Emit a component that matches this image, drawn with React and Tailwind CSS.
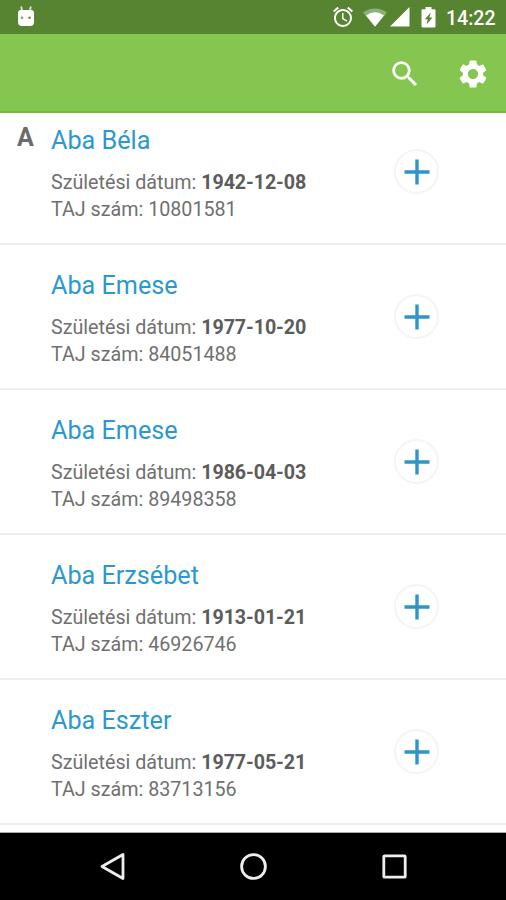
import React from 'react';
import { MdAlarm, MdSearch, MdSettings } from 'react-icons/md';

const patients = [
  { letter: 'A', name: 'Aba Béla', birth: '1942-12-08', taj: '10801581' },
  { name: 'Aba Emese', birth: '1977-10-20', taj: '84051488' },
  { name: 'Aba Emese', birth: '1986-04-03', taj: '89498358' },
  { name: 'Aba Erzsébet', birth: '1913-01-21', taj: '46926746' },
  { name: 'Aba Eszter', birth: '1977-05-21', taj: '83713156' },
];

function StatusBar() {
  return (
    <div className="flex h-[34px] shrink-0 items-center bg-[#568430] pl-[17px] pr-[11px] text-white">
      <svg className="mb-[2px] h-[21px] w-[18px]" viewBox="0 0 18 21">
        <path d="M4.200 0.500l1 5M13.800 0.500l-1 5" stroke="#dce8d2" strokeWidth="1.800" />
        <path
          d="M4 4h10q3 0 3 3v9q0 4-4 4H5q-4 0-4-4V7q0-3 3-3z"
          fill="#fff"
        />
        <circle cx="5" cy="11.800" r="1.300" fill="#8a9f6c" />
        <circle cx="12.500" cy="11.800" r="1.300" fill="#6f8a3c" />
      </svg>
      <MdAlarm className="ml-auto size-6" />
      <svg className="ml-[8px] h-[19px] w-6" viewBox="0 0 24 19">
        <path d="M0 4.500Q12-3.500 24 4.500L12 19z" fill="#fff" opacity=".35" />
        <path d="M3 7.500Q12 1 21 7.500L12 18.500z" fill="#fff" />
      </svg>
      <svg className="ml-[3px] h-5 w-5" viewBox="0 0 20 20">
        <path d="M0 19.500L19.500 0v19.500z" fill="#fff" />
      </svg>
      <svg className="ml-[11px] h-[21px] w-[15px]" viewBox="0 0 15 21">
        <path
          d="M4.500 0h6v2.300h2.700q1.300 0 1.300 1.300v15.600q0 1.300-1.300 1.300H1.800q-1.300 0-1.300-1.300V3.600q0-1.300 1.300-1.300h2.700z"
          fill="#fff"
        />
        <path d="M9.800 5.500L3.800 12.200h3L5.500 17.500l6-7H8.300z" fill="#568430" />
      </svg>
      <span className="ml-[10px] w-[49px] pt-[3px] text-[19.500px] font-medium leading-none">14:22</span>
    </div>
  );
}

function Toolbar() {
  return (
    <div className="flex h-[79px] shrink-0 items-center justify-end gap-[34px] border-b-2 border-[#74bd2c] bg-[#84c650] pr-4 pt-[2px] text-white">
      <MdSearch className="size-[34px]" />
      <MdSettings className="size-[34px]" />
    </div>
  );
}

function PatientRow({ patient }) {
  return (
    <div className="flex h-[145px] shrink-0 border-b-2 border-[#eeeeee] pt-[26px]">
      <div className="w-[51px] pl-[17px] text-[25px] font-bold leading-[24px] text-[#6b6b6b]">
        {patient.letter}
      </div>
      <div className="w-[343px] text-[19.700px] leading-[27px] text-[#707070]">
        <h2 className="mb-[13px] text-[25.200px] leading-[30px] text-[#2b99d0]">{patient.name}</h2>
        <p>
          Születési dátum: <b className="font-bold tracking-[-0.100px] text-[#5c5c5c]">{patient.birth}</b>
        </p>
        <p>TAJ szám: {patient.taj}</p>
      </div>
      <button className="mt-[23px] flex size-[45px] items-center justify-center rounded-full border-2 border-[#f5f5f5]">
        <svg className="size-[26px]" viewBox="0 0 26 26">
          <path d="M13 .5v25M.5 13h25" stroke="#2f95c8" strokeWidth="3.400" />
        </svg>
      </button>
    </div>
  );
}

function NavBar() {
  return (
    <div className="flex h-[67px] shrink-0 items-center justify-center gap-[112px] bg-black">
      <svg className="size-[29px]" viewBox="0 0 29 29">
        <path d="M25 2.500v24L4 14.500z" fill="none" stroke="#eee" strokeWidth="2.800" strokeLinejoin="round" />
      </svg>
      <svg className="size-[29px]" viewBox="0 0 29 29">
        <circle cx="14.500" cy="14.500" r="11.900" fill="none" stroke="#eee" strokeWidth="2.800" />
      </svg>
      <svg className="size-[29px]" viewBox="0 0 29 29">
        <rect x="3.800" y="3.800" width="21.400" height="21.400" rx=".8" fill="none" stroke="#eee" strokeWidth="2.800" />
      </svg>
    </div>
  );
}

export default function App() {
  return (
    <div className="flex h-[900px] w-[506px] flex-col overflow-hidden bg-white font-['Roboto',sans-serif]">
      <StatusBar />
      <Toolbar />
      {/* the list is scrolled a little, so the first row starts under the toolbar */}
      <div className="flex min-h-0 flex-1 flex-col justify-end overflow-hidden border-b border-[#aaa] pb-[7px]">
        {patients.map((patient, i) => (
          <PatientRow key={i} patient={patient} />
        ))}
      </div>
      <NavBar />
    </div>
  );
}
